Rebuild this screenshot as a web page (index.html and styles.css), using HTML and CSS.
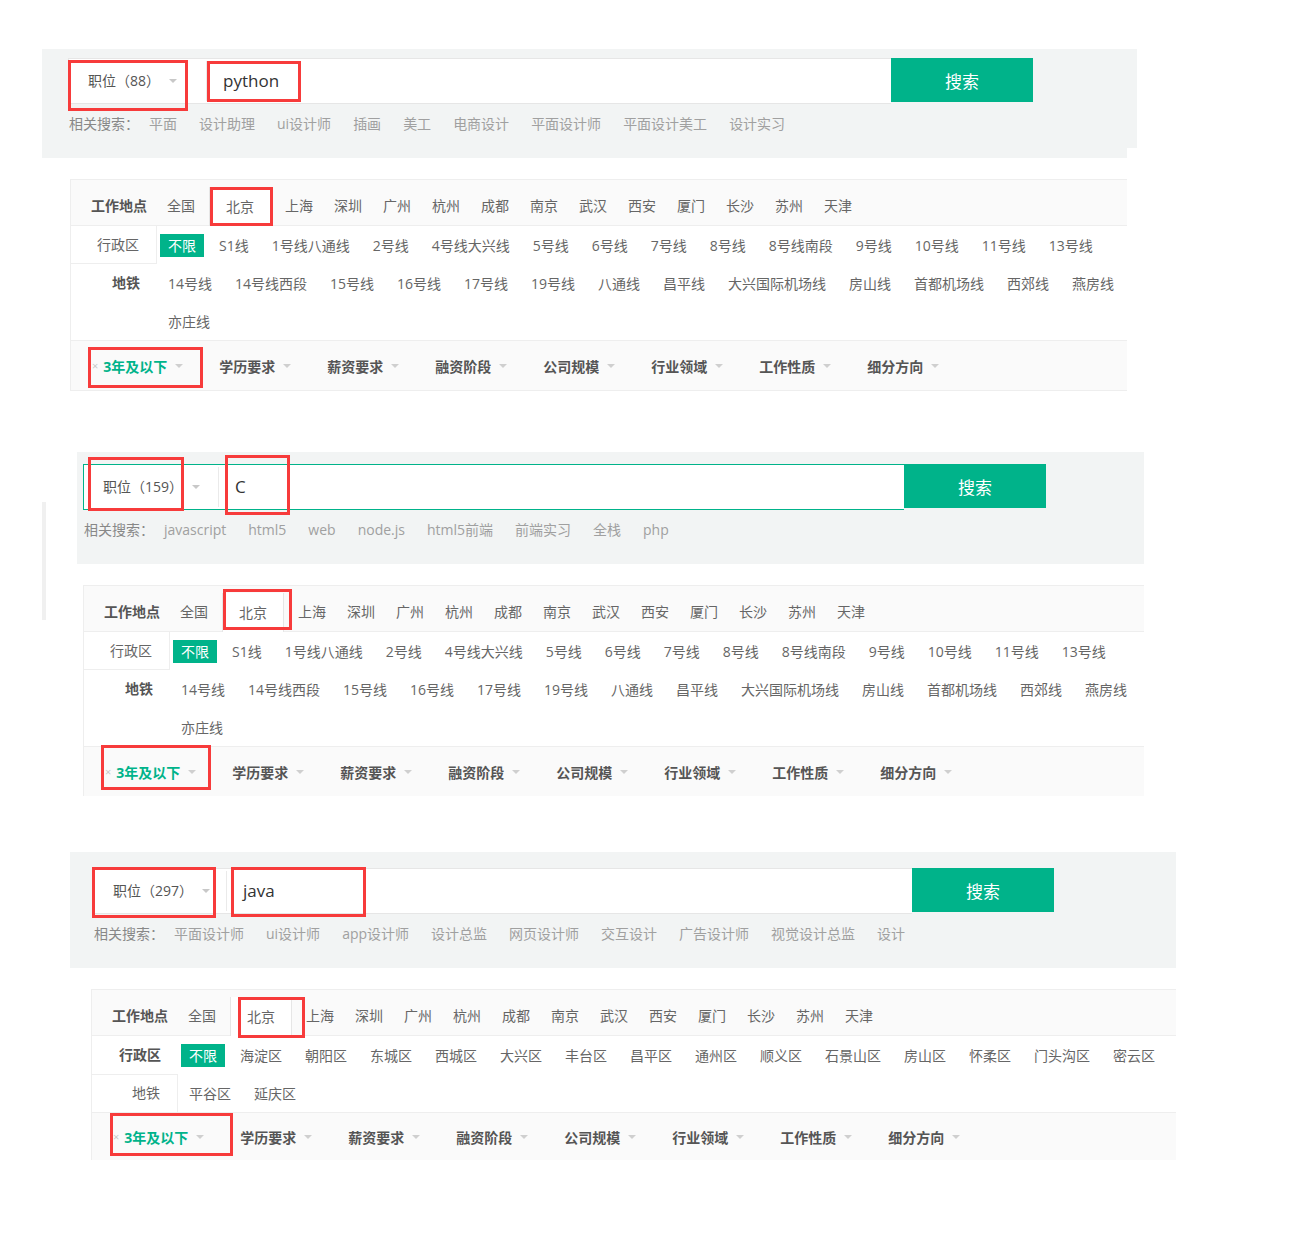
FILE: index.html
```html
<!DOCTYPE html>
<html lang="zh-CN">
<head>
<meta charset="utf-8">
<title>职位搜索</title>
<link rel="stylesheet" href="styles.css">
</head>
<body>

<section class="panel p1">
  <div class="srch">
    <div class="sbox">
      <div class="sel"><span>职位（88）</span><i class="caret"></i></div>
      <div class="inp">python</div>
    </div>
    <div class="btn">搜索</div>
  </div>
  <div class="related">
    <span class="rl">相关搜索：</span>
    <span>平面</span><span>设计助理</span><span>ui设计师</span><span>插画</span><span>美工</span><span>电商设计</span><span>平面设计师</span><span>平面设计美工</span><span>设计实习</span>
  </div>
  <i class="notch"></i>
  <i class="mk m-p1a"></i>
  <i class="mk m-p1b"></i>
</section>

<section class="filter f1">
  <div class="city">
    <span class="lbl">工作地点</span>
    <span>全国</span><span class="tab">北京</span><span>上海</span><span>深圳</span><span>广州</span><span>杭州</span><span>成都</span><span>南京</span><span>武汉</span><span>西安</span><span>厦门</span><span>长沙</span><span>苏州</span><span>天津</span>
  </div>
  <div class="line">
    <div class="side brb">行政区</div>
    <div class="opts"><span class="all">不限</span><span>S1线</span><span>1号线八通线</span><span>2号线</span><span>4号线大兴线</span><span>5号线</span><span>6号线</span><span>7号线</span><span>8号线</span><span>8号线南段</span><span>9号线</span><span>10号线</span><span>11号线</span><span>13号线</span></div>
  </div>
  <div class="line">
    <div class="side b">地铁</div>
    <div class="opts"><span>14号线</span><span>14号线西段</span><span>15号线</span><span>16号线</span><span>17号线</span><span>19号线</span><span>八通线</span><span>昌平线</span><span>大兴国际机场线</span><span>房山线</span><span>首都机场线</span><span>西郊线</span><span>燕房线</span></div>
  </div>
  <div class="line">
    <div class="side"></div>
    <div class="opts"><span>亦庄线</span></div>
  </div>
  <div class="cond">
    <span class="x">×</span>
    <span class="it on">3年及以下<i class="caret"></i></span>
    <span class="it">学历要求<i class="caret"></i></span>
    <span class="it">薪资要求<i class="caret"></i></span>
    <span class="it">融资阶段<i class="caret"></i></span>
    <span class="it">公司规模<i class="caret"></i></span>
    <span class="it">行业领域<i class="caret"></i></span>
    <span class="it">工作性质<i class="caret"></i></span>
    <span class="it">细分方向<i class="caret"></i></span>
  </div>
  <i class="mk m-f1a"></i>
  <i class="mk m-f1b"></i>
</section>

<section class="panel p2">
  <div class="srch">
    <div class="sbox">
      <div class="sel"><span>职位（159）</span><i class="caret"></i></div>
      <div class="inp">C</div>
    </div>
    <div class="btn">搜索</div>
  </div>
  <div class="related">
    <span class="rl">相关搜索：</span>
    <span>javascript</span><span>html5</span><span>web</span><span>node.js</span><span>html5前端</span><span>前端实习</span><span>全栈</span><span>php</span>
  </div>
  <i class="stray"></i>
  <i class="mk m-p2a"></i>
  <i class="mk m-p2b"></i>
</section>

<section class="filter f2">
  <div class="city">
    <span class="lbl">工作地点</span>
    <span>全国</span><span class="tab">北京</span><span>上海</span><span>深圳</span><span>广州</span><span>杭州</span><span>成都</span><span>南京</span><span>武汉</span><span>西安</span><span>厦门</span><span>长沙</span><span>苏州</span><span>天津</span>
  </div>
  <div class="line">
    <div class="side brb">行政区</div>
    <div class="opts"><span class="all">不限</span><span>S1线</span><span>1号线八通线</span><span>2号线</span><span>4号线大兴线</span><span>5号线</span><span>6号线</span><span>7号线</span><span>8号线</span><span>8号线南段</span><span>9号线</span><span>10号线</span><span>11号线</span><span>13号线</span></div>
  </div>
  <div class="line">
    <div class="side b">地铁</div>
    <div class="opts"><span>14号线</span><span>14号线西段</span><span>15号线</span><span>16号线</span><span>17号线</span><span>19号线</span><span>八通线</span><span>昌平线</span><span>大兴国际机场线</span><span>房山线</span><span>首都机场线</span><span>西郊线</span><span>燕房线</span></div>
  </div>
  <div class="line">
    <div class="side"></div>
    <div class="opts"><span>亦庄线</span></div>
  </div>
  <div class="cond">
    <span class="x">×</span>
    <span class="it on">3年及以下<i class="caret"></i></span>
    <span class="it">学历要求<i class="caret"></i></span>
    <span class="it">薪资要求<i class="caret"></i></span>
    <span class="it">融资阶段<i class="caret"></i></span>
    <span class="it">公司规模<i class="caret"></i></span>
    <span class="it">行业领域<i class="caret"></i></span>
    <span class="it">工作性质<i class="caret"></i></span>
    <span class="it">细分方向<i class="caret"></i></span>
  </div>
  <i class="mk m-f2a"></i>
  <i class="mk m-f2b"></i>
</section>

<section class="panel p3">
  <div class="srch">
    <div class="sbox">
      <div class="sel"><span>职位（297）</span><i class="caret"></i></div>
      <div class="inp">java</div>
    </div>
    <div class="btn">搜索</div>
  </div>
  <div class="related">
    <span class="rl">相关搜索：</span>
    <span>平面设计师</span><span>ui设计师</span><span>app设计师</span><span>设计总监</span><span>网页设计师</span><span>交互设计</span><span>广告设计师</span><span>视觉设计总监</span><span>设计</span>
  </div>
  <i class="mk m-p3a"></i>
  <i class="mk m-p3b"></i>
</section>

<section class="filter f3">
  <div class="city">
    <span class="lbl">工作地点</span>
    <span>全国</span><span class="tab">北京</span><span>上海</span><span>深圳</span><span>广州</span><span>杭州</span><span>成都</span><span>南京</span><span>武汉</span><span>西安</span><span>厦门</span><span>长沙</span><span>苏州</span><span>天津</span>
  </div>
  <div class="line">
    <div class="side b">行政区</div>
    <div class="opts"><span class="all">不限</span><span>海淀区</span><span>朝阳区</span><span>东城区</span><span>西城区</span><span>大兴区</span><span>丰台区</span><span>昌平区</span><span>通州区</span><span>顺义区</span><span>石景山区</span><span>房山区</span><span>怀柔区</span><span>门头沟区</span><span>密云区</span></div>
  </div>
  <div class="line">
    <div class="side brt">地铁</div>
    <div class="opts"><span>平谷区</span><span>延庆区</span></div>
  </div>
  <div class="cond">
    <span class="x">×</span>
    <span class="it on">3年及以下<i class="caret"></i></span>
    <span class="it">学历要求<i class="caret"></i></span>
    <span class="it">薪资要求<i class="caret"></i></span>
    <span class="it">融资阶段<i class="caret"></i></span>
    <span class="it">公司规模<i class="caret"></i></span>
    <span class="it">行业领域<i class="caret"></i></span>
    <span class="it">工作性质<i class="caret"></i></span>
    <span class="it">细分方向<i class="caret"></i></span>
  </div>
  <i class="mk m-f3a"></i>
  <i class="mk m-f3b"></i>
</section>

</body>
</html>
```

FILE: styles.css
```css
html, body {
  margin: 0;
  padding: 0;
  background: #fff;
}
body {
  font-family: "Open Sans", "Noto Sans CJK SC", sans-serif;
  font-size: 14px;
  color: #666;
  width: 1293px;
  padding-bottom: 60px;
}
section {
  display: block;
}

/* ---------- search panels ---------- */
.panel {
  position: relative;
  box-sizing: border-box;
  background: #f2f4f4;
}
.p1 {
  margin: 49px 0 0 42px;
  width: 1095px;
  height: 109px;
  padding: 9px 0 0 26px;
}
.p2 {
  margin: 61px 0 0 77px;
  width: 1067px;
  height: 112px;
  padding: 12px 0 0 6px;
}
.p3 {
  margin: 56px 0 0 70px;
  width: 1106px;
  height: 116px;
  padding: 16px 0 0 23px;
}
.srch {
  display: flex;
  align-items: flex-start;
}
.sbox {
  display: flex;
  height: 46px;
  box-sizing: border-box;
  background: #fff;
  border: 1px solid #e6e6e6;
  border-right: 0;
}
.p1 .sbox { width: 823px; }
.p2 .sbox { width: 821px; border: 1px solid #00b38a; border-right: 0; }
.p3 .sbox { width: 819px; }
.sel {
  display: flex;
  align-items: center;
  box-sizing: border-box;
  padding-left: 19px;
  margin: 2px 0;
  border-right: 1px solid #eaeaea;
  color: #555;
  line-height: 40px;
}
.p1 .sel { width: 138px; }
.p2 .sel { width: 135px; }
.p3 .sel { width: 133px; }
.caret {
  display: inline-block;
  width: 0;
  height: 0;
  border-left: 4px solid transparent;
  border-right: 4px solid transparent;
  border-top: 4px solid #c8c8c8;
  margin-left: 9px;
}
.inp {
  padding-left: 16px;
  font-size: 17px;
  color: #333;
  line-height: 44px;
}
.btn {
  width: 142px;
  height: 44px;
  background: #00b38a;
  color: #fff;
  font-size: 17px;
  display: flex;
  align-items: center;
  justify-content: center;
}
.related {
  display: flex;
  margin-top: 10px;
  padding-left: 1px;
  line-height: 20px;
  color: #a0a0a0;
}
.related span {
  margin-right: 22px;
}
.related .rl {
  color: #888;
  margin-right: 10px;
}
.notch {
  position: absolute;
  right: 0;
  bottom: 0;
  width: 10px;
  height: 10px;
  background: #fff;
}
.stray {
  position: absolute;
  left: -35px;
  top: 50px;
  width: 4px;
  height: 118px;
  background: #f0f0f0;
}

/* ---------- filter boxes ---------- */
.filter {
  position: relative;
  box-sizing: border-box;
  border-top: 1px solid #eee;
  border-left: 1px solid #eee;
  background: #fff;
}
.f1 {
  margin: 21px 0 0 70px;
  width: 1057px;
  border-bottom: 1px solid #eee;
}
.f2 {
  margin: 21px 0 0 83px;
  width: 1061px;
}
.f3 {
  margin: 21px 0 0 91px;
  width: 1085px;
}

.city {
  display: flex;
  align-items: flex-end;
  height: 46px;
  box-sizing: border-box;
  background: #fafafa;
  border-bottom: 1px solid #eee;
}
.city span {
  line-height: 38px;
  margin-right: 21px;
  color: #666;
  white-space: nowrap;
}
.city .lbl {
  width: 76px;
  padding-left: 20px;
  margin-right: 0;
  font-weight: bold;
  color: #555;
}
.city .tab {
  position: relative;
  background: #fff;
  border-left: 1px solid #e6e6e6;
  border-right: 1px solid #e6e6e6;
  padding: 0 16px;
  line-height: 39px;
  margin: 0 14px -1px -7px;
}

.line {
  display: flex;
  height: 38px;
  align-items: stretch;
}
.side {
  width: 86px;
  flex: none;
  box-sizing: border-box;
  padding-right: 17px;
  text-align: right;
  line-height: 38px;
  color: #666;
}
.side.b {
  font-weight: bold;
  color: #555;
}
.side.brb {
  border-right: 1px solid #eee;
  border-bottom: 1px solid #eee;
  line-height: 37px;
}
.side.brt {
  border-right: 1px solid #eee;
  border-top: 1px solid #eee;
  line-height: 36px;
}
.opts {
  display: flex;
  align-items: center;
  padding-left: 11px;
  white-space: nowrap;
}
.opts span {
  margin-right: 23px;
  color: #666;
}
.opts .all {
  background: #00b38a;
  color: #fff;
  padding: 0 8px;
  margin-left: -8px;
  margin-right: 15px;
  line-height: 23px;
}

.cond {
  display: flex;
  align-items: center;
  height: 50px;
  box-sizing: border-box;
  border-top: 1px solid #eee;
  background: #fafafa;
  padding-left: 21px;
}
.f3 .cond { height: 48px; }
.cond .x {
  color: #c8c8c8;
  font-size: 11px;
  margin-right: 5px;
}
.cond .it {
  display: flex;
  align-items: center;
  font-weight: bold;
  color: #555;
  margin-right: 36px;
  white-space: nowrap;
}
.cond .it .caret {
  margin-left: 8px;
  border-top-color: #cfcfcf;
}
.cond .it.on {
  color: #00b38a;
}

/* ---------- red annotation boxes ---------- */
.mk {
  position: absolute;
  box-sizing: border-box;
  border: 3px solid #f73b3b;
  pointer-events: none;
}
.m-p1a { left: 26px; top: 11px; width: 120px; height: 51px; }
.m-p1b { left: 165px; top: 12px; width: 94px; height: 41px; }
.m-f1a { left: 139px; top: 7px; width: 63px; height: 39px; }
.m-f1b { left: 17px; top: 167px; width: 115px; height: 41px; }
.m-p2a { left: 11px; top: 5px; width: 96px; height: 54px; }
.m-p2b { left: 148px; top: 3px; width: 65px; height: 60px; }
.m-f2a { left: 139px; top: 3px; width: 69px; height: 41px; }
.m-f2b { left: 17px; top: 159px; width: 110px; height: 45px; }
.m-p3a { left: 22px; top: 15px; width: 124px; height: 51px; }
.m-p3b { left: 161px; top: 15px; width: 135px; height: 50px; }
.m-f3a { left: 146px; top: 7px; width: 67px; height: 41px; }
.m-f3b { left: 18px; top: 123px; width: 123px; height: 43px; }
```
